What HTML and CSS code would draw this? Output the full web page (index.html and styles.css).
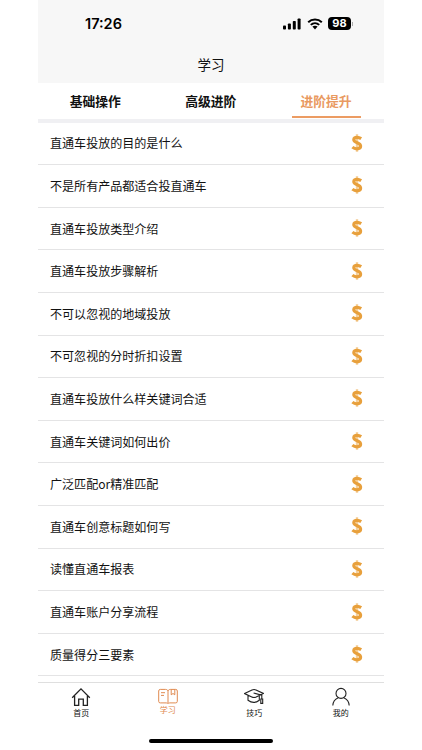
FILE: index.html
```
<!DOCTYPE html>
<html lang="zh-CN">
    <head>
        <meta charset="UTF-8">
        <meta name="viewport" content="width=device-width, initial-scale=1.0">
        <link rel="stylesheet" href="styles.css">
        <title>学习</title>
    </head>
    <body>
        <svg width="0" height="0" class="sprite">
            <symbol id="dollar" viewBox="0 0 12 20">
                <path d="M6 1.2v17.6" stroke="#f4cf9b" stroke-width="2.4" fill="none"/>
                <path d="M10.2 5.6C8.8 4.7 7.4 4.3 6 4.3C4.2 4.3 2.8 5.1 2.8 6.7C2.8 8.4 4.3 9 6.2 9.7C8.3 10.5 9.6 11.3 9.6 13.1C9.6 14.9 8 15.8 6 15.8C4.3 15.8 2.7 15.2 1.4 14.1" stroke="#e8a03c" stroke-width="3.2" fill="none"/>
            </symbol>
        </svg>

        <div class="phone">
            <header class="header">
                <div class="status">
                    <span class="time">17:26</span>
                    <div class="signals">
                        <svg width="18" height="12" viewBox="0 0 18 12">
                            <rect x="0" y="7.5" width="3" height="4" rx="0.8"/>
                            <rect x="4.9" y="5.5" width="3" height="6" rx="0.8"/>
                            <rect x="9.8" y="3" width="3" height="8.5" rx="0.8"/>
                            <rect x="14.6" y="0.5" width="3" height="11" rx="0.8"/>
                        </svg>
                        <svg class="wifi" width="16" height="12" viewBox="0 0 16 12">
                            <path d="M1.2 4.3C5 0.6 11 0.6 14.8 4.3M3.8 6.9C6.2 4.6 9.8 4.6 12.2 6.9" fill="none" stroke="#000" stroke-width="2"/>
                            <path d="M5.4 8.6C6.9 7.3 9.1 7.3 10.6 8.6L8 11.4z"/>
                        </svg>
                        <span class="battery">98</span>
                        <i class="battery-cap"></i>
                    </div>
                </div>
                <div class="title">学习</div>
            </header>

            <nav class="tabs">
                <a class="tab">基础操作</a>
                <a class="tab">高级进阶</a>
                <a class="tab active">进阶提升</a>
            </nav>

            <ul class="list">
                <li><span>直通车投放的目的是什么</span><svg class="dollar"><use href="#dollar"/></svg></li>
                <li><span>不是所有产品都适合投直通车</span><svg class="dollar"><use href="#dollar"/></svg></li>
                <li><span>直通车投放类型介绍</span><svg class="dollar"><use href="#dollar"/></svg></li>
                <li><span>直通车投放步骤解析</span><svg class="dollar"><use href="#dollar"/></svg></li>
                <li><span>不可以忽视的地域投放</span><svg class="dollar"><use href="#dollar"/></svg></li>
                <li><span>不可忽视的分时折扣设置</span><svg class="dollar"><use href="#dollar"/></svg></li>
                <li><span>直通车投放什么样关键词合适</span><svg class="dollar"><use href="#dollar"/></svg></li>
                <li><span>直通车关键词如何出价</span><svg class="dollar"><use href="#dollar"/></svg></li>
                <li><span>广泛匹配or精准匹配</span><svg class="dollar"><use href="#dollar"/></svg></li>
                <li><span>直通车创意标题如何写</span><svg class="dollar"><use href="#dollar"/></svg></li>
                <li><span>读懂直通车报表</span><svg class="dollar"><use href="#dollar"/></svg></li>
                <li><span>直通车账户分享流程</span><svg class="dollar"><use href="#dollar"/></svg></li>
                <li><span>质量得分三要素</span><svg class="dollar"><use href="#dollar"/></svg></li>
            </ul>

            <nav class="tabbar">
                <a class="item">
                    <svg width="20" height="20" viewBox="0 0 20 20">
                        <path d="M1.2 10.7L10 1.8L18.8 10.7M3.6 9V18.3H7.7V12.2H12.3V18.3H16.4V9" stroke-width="1.3"/>
                    </svg>
                    <span>首页</span>
                </a>
                <a class="item active">
                    <svg width="20" height="17" viewBox="0 0 20 17">
                        <path d="M10 3C9.5 1.8 8.7 1.4 7.5 1.4H2.3Q0.7 1.4 0.7 3V13.4Q0.7 14.9 2.3 14.9H8.2Q9.5 14.9 10 15.8Q10.5 14.9 11.8 14.9H17.7Q19.3 14.9 19.3 13.4V3Q19.3 1.4 17.7 1.4H12.5C11.3 1.4 10.5 1.8 10 3V15M3 4.7H7M3 7.4H6M13.2 1.4V6.8L15 5.5L16.8 6.8V1.4" stroke-width="1"/>
                    </svg>
                    <span>学习</span>
                </a>
                <a class="item">
                    <svg width="20" height="20" viewBox="0 0 20 20">
                        <path d="M0.6 6.6L8 2.9Q10 2 12 2.9L19.4 6.4L12.2 10Q10 11 7.8 10ZM4 8.4V13.2Q9.8 17.6 15.3 13.2V8.6M9.6 6L17.8 8.2V12M16.8 12H18.7V16.4H16.8Z" stroke-width="1.1"/>
                    </svg>
                    <span>技巧</span>
                </a>
                <a class="item">
                    <svg width="20" height="20" viewBox="0 0 20 20">
                        <circle cx="10" cy="6.4" r="5" stroke-width="1.1"/>
                        <path d="M1.8 18.5C2 14.7 4.2 12 7.2 10.7M18.2 18.5C18 14.7 15.8 12 12.8 10.7" stroke-width="1.1"/>
                    </svg>
                    <span>我的</span>
                </a>
            </nav>
            <div class="home-bar"></div>
        </div>
    </body>
</html>
```
FILE: styles.css
```
* {
    box-sizing: border-box;
}

body {
    margin: 0;
    background: #fff;
    color: #111;
    font-family: "Noto Sans CJK SC", sans-serif;
}

.sprite {
    display: block;
}

.phone {
    width: 346px;
    height: 750px;
    margin-left: 38px;
    display: flex;
    flex-direction: column;
    overflow: hidden;
}

.header {
    height: 83px;
    background: #f7f7f7;
    flex: none;
}

.status {
    display: flex;
    justify-content: space-between;
    align-items: center;
    height: 47px;
    padding: 0 31px 0 47px;
}

.time {
    font-family: Inter, sans-serif;
    font-size: 14.5px;
    font-weight: 600;
    line-height: 20px;
    color: #000;
}

.signals {
    display: flex;
    align-items: center;
}

.wifi {
    margin-left: 6px;
}

.battery {
    width: 23px;
    height: 13px;
    margin-left: 5px;
    border-radius: 4px;
    background: #000;
    color: #fff;
    font-family: Inter, sans-serif;
    font-size: 11px;
    font-weight: 700;
    line-height: 13px;
    text-align: center;
}

.battery-cap {
    width: 1px;
    height: 4px;
    margin-left: 1px;
    background: #aaa;
}

.title {
    font-size: 13.5px;
    line-height: 20px;
    margin-top: 7px;
    text-align: center;
}

.tabs {
    display: flex;
    flex: none;
    height: 39.5px;
    border-bottom: 4px solid #f0f0f3;
}

.tab {
    flex: 1;
    display: flex;
    justify-content: center;
    padding-right: 1px;
    font-size: 12.8px;
    font-weight: 700;
    line-height: 36px;
    color: #111;
}

.tab.active {
    flex: none;
    width: 69px;
    height: 35px;
    margin: 0 23px;
    border-bottom: 2px solid #ec9c63;
    color: #e99a62;
}

.list {
    flex: none;
    height: 559.5px;
    margin: 0;
    padding: 0;
    list-style: none;
}

.list li {
    display: flex;
    justify-content: space-between;
    align-items: center;
    height: 42.62px;
    padding: 0 21px 1px 12px;
    border-bottom: 1px solid #e4e4e5;
    font-size: 12.05px;
}

.dollar {
    width: 12px;
    height: 20px;
}

.tabbar {
    display: flex;
    flex: none;
    height: 50px;
    border-top: 1px solid #dfdfdf;
}

.item {
    flex: 1;
    display: flex;
    flex-direction: column;
    align-items: center;
    padding-top: 4px;
    font-size: 8px;
    line-height: 12px;
}

.item svg {
    fill: none;
    stroke: #222;
}

.item.active {
    padding-top: 5px;
    color: #e08a50;
}

.item.active svg {
    stroke: #e08a50;
}

.item.active span {
    margin-top: -1px;
}

.home-bar {
    width: 124px;
    height: 4px;
    margin: 7px auto 0;
    border-radius: 2px;
    background: #000;
}
```
